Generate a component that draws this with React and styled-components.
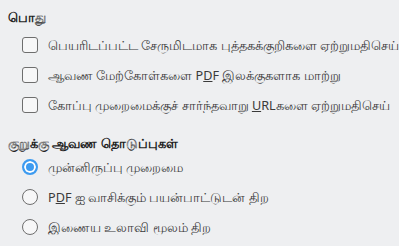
import React from "react";
import styled, { createGlobalStyle } from "styled-components";

const Global = createGlobalStyle`
  html, body { margin: 0; padding: 0; background: #eeeff1; }
  body { font-family: "Noto Sans", "DejaVu Sans", sans-serif; color: #3a3a3a; }
`;

const Page = styled.div`
  padding: 7px 8px 0 8px;
  display: flex;
  flex-direction: column;
`;

const Section = styled.section`
  display: flex;
  flex-direction: column;
  margin-bottom: ${(p) => p.$mb || 0}px;
`;

const Heading = styled.h3`
  margin: 0;
  font-size: 13px;
  font-weight: 600;
  color: #1e1e1e;
  line-height: 20px;
  height: 20px;
`;

const List = styled.div`
  display: flex;
  flex-direction: column;
  padding-left: 14px;
  margin-top: ${(p) => p.$mt}px;
  gap: 14px;
`;

const Row = styled.label`
  display: flex;
  align-items: center;
  gap: 10px;
  height: 16px;
  font-size: 12.65px;
  color: #3a3a3a;
  white-space: nowrap;
`;

const Text = styled.span`
  line-height: 16px;
`;

const Box = styled.span`
  width: 16px;
  height: 16px;
  box-sizing: border-box;
  border: 1.5px solid #6e6e6e;
  border-radius: 3px;
  background: #f7f7f8;
  flex: none;
`;

const Radio = styled.span`
  width: 16px;
  height: 16px;
  box-sizing: border-box;
  border-radius: 50%;
  flex: none;
  border: ${(p) => (p.$on ? "2px solid #3d9bf0" : "1.5px solid #6e6e6e")};
  background: ${(p) => (p.$on ? "#3d9bf0" : "#f7f7f8")};
  box-shadow: ${(p) => (p.$on ? "inset 0 0 0 2px #ffffff" : "none")};
`;

const U = styled.span`
  text-decoration: underline;
`;

export default function App() {
  return (
    <>
      <Global />
      <Page>
        <Section $mb={20}>
          <Heading>பொது</Heading>
          <List $mt={10}>
            <Row><Box /><Text>பெயரிடப்பட்ட சேருமிடமாக புத்தகக்குறிகளை ஏற்றுமதிசெய்</Text></Row>
            <Row><Box /><Text>ஆவண மேற்கோள்களை P<U>D</U>F இலக்குகளாக மாற்று</Text></Row>
            <Row><Box /><Text>கோப்பு முறைமைக்குச் சார்ந்தவாறு <U>U</U>RLகளை ஏற்றுமதிசெய்</Text></Row>
          </List>
        </Section>
        <Section>
          <Heading>குறுக்கு ஆவண தொடுப்புகள்</Heading>
          <List $mt={6}>
            <Row><Radio $on /><Text>முன்னிருப்பு முறைமை</Text></Row>
            <Row><Radio /><Text>P<U>D</U>F ஐ வாசிக்கும் பயன்பாட்டுடன் திற</Text></Row>
            <Row><Radio /><Text>இணைய உலாவி மூலம் திற</Text></Row>
          </List>
        </Section>
      </Page>
    </>
  );
}
